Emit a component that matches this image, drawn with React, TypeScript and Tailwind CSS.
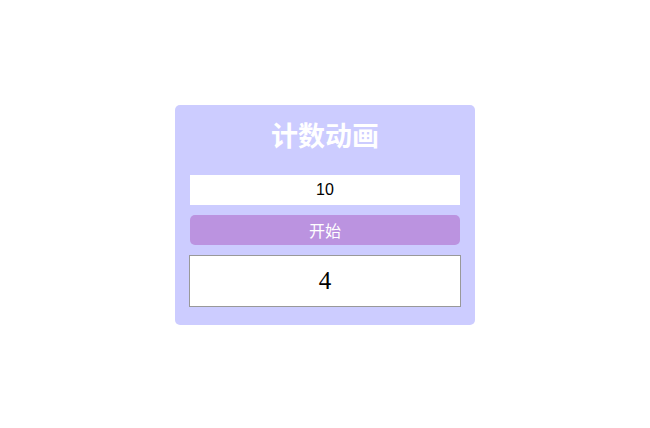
export default function App() {
  return (
    <div className="flex h-screen w-full items-center justify-center bg-white pt-[2px]">
      <div className="box-border flex w-[300px] flex-col rounded-[5px] bg-[#ccccff] px-[15px] pt-[15px] pb-[18px]">
        <div className="flex h-[30px] items-center justify-center font-['Noto_Sans_CJK_SC'] text-[27px] font-semibold text-white">
          计数动画
        </div>
        <div className="mt-[25px] flex h-[30px] w-[270px] items-center justify-center bg-white font-['Liberation_Sans'] text-[16px] text-black">
          10
        </div>
        <div className="mt-[10px] flex h-[30px] w-[270px] items-center justify-center rounded-[5px] bg-[#bb93e0] font-['Noto_Sans_CJK_SC'] text-[16px] font-normal text-white">
          开始
        </div>
        <div className="-mx-px mt-[10px] flex h-[52px] w-[272px] items-center justify-center border border-[#999999] bg-white font-['Liberation_Serif'] text-[25px] text-black">
          4
        </div>
      </div>
    </div>
  );
}
